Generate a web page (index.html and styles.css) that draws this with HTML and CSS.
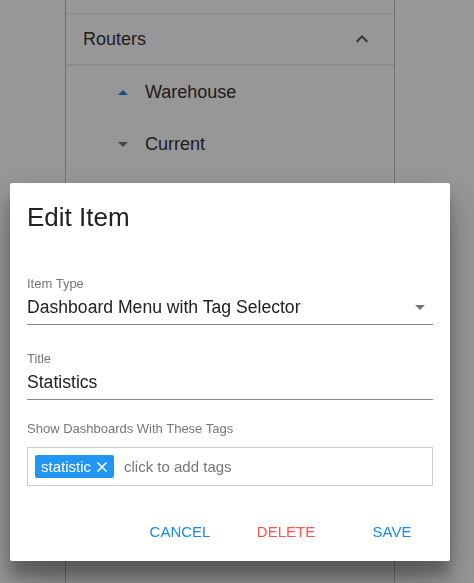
FILE: index.html
```html
<!DOCTYPE html>
<html lang="en">
<head>
    <meta charset="UTF-8">
    <meta name="viewport" content="width=device-width, initial-scale=1.0">
    <title>Edit Item</title>
    <link rel="stylesheet" href="styles.css">
</head>
<body>
    <div class="menu">
        <div class="menu-top"></div>
        <div class="menu-group">
            <span>Routers</span>
            <svg class="chevron" width="24" height="24" viewBox="0 0 24 24"><path d="M7.41 15.41L12 10.83l4.59 4.58L18 14l-6-6-6 6z"/></svg>
        </div>
        <div class="menu-item">
            <span class="caret up"></span>
            <span>Warehouse</span>
        </div>
        <div class="menu-item">
            <span class="caret down"></span>
            <span>Current</span>
        </div>
    </div>

    <div class="overlay">
        <div class="dialog">
            <h2>Edit Item</h2>

            <div class="field">
                <label>Item Type</label>
                <div class="select">
                    <span>Dashboard Menu with Tag Selector</span>
                    <span class="select-arrow"></span>
                </div>
            </div>

            <div class="field">
                <label>Title</label>
                <div class="input">Statistics</div>
            </div>

            <div class="field tags-field">
                <label>Show Dashboards With These Tags</label>
                <div class="tags">
                    <span class="chip">statistic
                        <svg width="12" height="12" viewBox="0 0 12 12"><path d="M1.5 1.5l9 9M10.5 1.5l-9 9" stroke="#fff" stroke-width="1.6" fill="none"/></svg>
                    </span>
                    <span class="tags-hint">click to add tags</span>
                </div>
            </div>

            <div class="actions">
                <button class="btn">Cancel</button>
                <button class="btn danger">Delete</button>
                <button class="btn">Save</button>
            </div>
        </div>
    </div>
</body>
</html>
```

FILE: styles.css
```css
body {
  margin: 0;
  height: 583px;
  background: #fcfcfc;
  font-family: "Liberation Sans", Arial, sans-serif;
  color: #333;
  overflow: hidden;
}

/* side menu behind the dialog */
.menu {
  margin-left: 65px;
  width: 328px;
  height: 100%;
  border-left: 1px solid #b9b9b9;
  border-right: 1px solid #b9b9b9;
}

.menu-top {
  height: 13px;
  border-bottom: 1px solid #e6e6e6;
}

.menu-group {
  height: 50px;
  display: flex;
  align-items: center;
  justify-content: space-between;
  padding: 0 20px 0 17px;
  font-size: 18px;
  border-bottom: 2px solid #e8e8e8;
}

.chevron {
  fill: #555;
}

.menu-item {
  height: 52px;
  display: flex;
  align-items: center;
  padding-left: 52px;
  font-size: 18px;
}

.caret {
  width: 0;
  height: 0;
  margin-right: 17px;
  border-left: 5px solid transparent;
  border-right: 5px solid transparent;
}

.caret.up {
  border-bottom: 5px solid #2f7ed6;
}

.caret.down {
  border-top: 5px solid #777;
}

.overlay {
  position: fixed;
  inset: 0;
  background: rgba(0, 0, 0, 0.4);
  padding: 183px 24px 0 10px;
}

.dialog {
  width: 440px;
  height: 378px;
  box-sizing: border-box;
  background: #fff;
  border-radius: 2px;
  padding: 0 17px;
  box-shadow: 0 19px 38px rgba(0, 0, 0, 0.3), 0 15px 12px rgba(0, 0, 0, 0.22);
}

.dialog h2 {
  margin: 0;
  padding: 19px 0 0;
  height: 72px;
  box-sizing: border-box;
  font-size: 26px;
  font-weight: normal;
  color: #222;
}

.field {
  margin-top: 22px;
}

.field + .field {
  margin-top: 27px;
}

.field.tags-field {
  margin-top: 22px;
}

.field label {
  display: block;
  font-size: 13px;
  color: #777;
  line-height: 14px;
}

.select,
.input {
  display: flex;
  align-items: center;
  justify-content: space-between;
  padding: 6px 0 7px;
  line-height: 20px;
  font-size: 17.6px;
  color: #222;
  border-bottom: 1px solid #888;
}

.select-arrow {
  width: 0;
  height: 0;
  margin-right: 8px;
  border-left: 5px solid transparent;
  border-right: 5px solid transparent;
  border-top: 5px solid #757575;
}

.tags-field label {
  margin-bottom: 11px;
}

.tags {
  display: flex;
  align-items: center;
  height: 37px;
  padding: 0 7px;
  border: 1px solid #ccc;
}

.chip {
  display: inline-flex;
  align-items: center;
  gap: 5px;
  height: 23px;
  padding: 0 6px;
  background: #2196f3;
  color: #fff;
  font-size: 15px;
  border-radius: 2px;
}

.tags-hint {
  margin-left: 10px;
  font-size: 15px;
  color: #777;
}

.actions {
  display: flex;
  justify-content: flex-end;
  gap: 6px;
  margin-top: 29px;
  margin-right: -9px;
}

.btn {
  width: 100px;
  background: none;
  border: none;
  font-family: inherit;
  font-size: 15px;
  text-transform: uppercase;
  color: #1e88e5;
  padding: 8px 0;
}

.btn.danger {
  color: #ff5252;
}
```
